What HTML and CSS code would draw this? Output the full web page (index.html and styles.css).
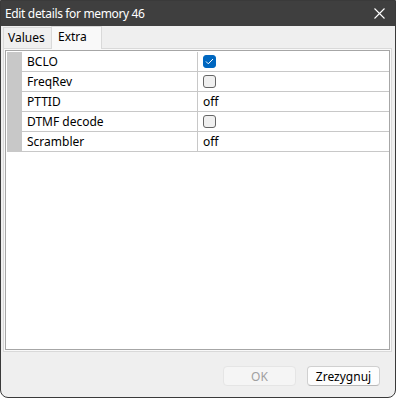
FILE: index.html
```html
<!DOCTYPE html>
<html>
<head>
<meta charset="utf-8">
<link rel="stylesheet" href="styles.css">
</head>
<body>
<div class="window">
  <div class="titlebar">
    <span class="title">Edit details for memory 46</span>
    <svg class="close" width="11" height="11" viewBox="0 0 11 11"><path d="M0.5 0.5 L10.5 10.5 M10.5 0.5 L0.5 10.5" stroke="#ffffff" stroke-width="1.1" fill="none"/></svg>
  </div>
  <div class="client">
    <div class="tabs">
      <div class="tab">Values</div>
      <div class="tab active">Extra</div>
    </div>
    <div class="panel">
      <div class="grid">
        <div class="row"><div class="hdr"></div><div class="name">BCLO</div><div class="val"><span class="cb checked"><svg width="9" height="7" viewBox="0 0 9 7"><path d="M1 3.5 L3.3 5.8 L8 1" stroke="#ffffff" stroke-width="1" fill="none"/></svg></span></div></div>
        <div class="row"><div class="hdr"></div><div class="name">FreqRev</div><div class="val"><span class="cb"></span></div></div>
        <div class="row"><div class="hdr"></div><div class="name">PTTID</div><div class="val">off</div></div>
        <div class="row"><div class="hdr"></div><div class="name">DTMF decode</div><div class="val"><span class="cb"></span></div></div>
        <div class="row"><div class="hdr"></div><div class="name">Scrambler</div><div class="val">off</div></div>
      </div>
    </div>
    <div class="footer">
      <button class="btn disabled">OK</button>
      <button class="btn">Zrezygnuj</button>
    </div>
  </div>
</div>
</body>
</html>
```
FILE: styles.css
```css
* { box-sizing: border-box; }
html, body { margin: 0; padding: 0; background: #ffffff; }
body { font-family: "Noto Sans", "Open Sans", sans-serif; font-size: 12px; }
.window {
  width: 396px; height: 398px;
  border: 1px solid #3a3a3a;
  border-radius: 0 0 8px 8px;
  background: #efefef;
  display: flex; flex-direction: column;
  overflow: hidden;
}
.titlebar {
  height: 25px; background: #3f3f3f; color: #ffffff;
  display: flex; align-items: center; justify-content: space-between;
  padding: 0 10px 0 4px;
  flex: none;
}
.title { font-size: 12px; line-height: 14px; letter-spacing: -0.35px; }
.close { display: block; }
.client { flex: 1; display: flex; flex-direction: column; }
.tabs { display: flex; height: 22px; padding-left: 2px; align-items: flex-end; flex: none; }
.tab {
  height: 21px; padding: 0 6px; line-height: 20px;
  border: 1px solid #d9d9d9; border-bottom: none;
  background: #efefef; color: #000;
}
.tab:first-child { border-right: none; width: 48px; padding-left: 4px; }
.tab.active { height: 23px; background: #f9f9f9; width: 51px; padding-left: 6px; line-height: 19px; margin-bottom: -1px; position: relative; }
.panel {
  margin: 0 3px 0 2px;
  height: 304px;
  border: 1px solid #d9d9d9;
  padding: 1px;
  flex: none;
  background: #f9f9f9;
}
.grid {
  height: 100%;
  border: 1px solid #a6a6a6;
  background: #ffffff;
  padding: 1px 0 0 1px;
}
.row { display: flex; height: 20px; }
.hdr { width: 15px; background: #c8c8c8; flex: none; }
.name {
  width: 176px; flex: none;
  border-right: 1px solid #c8c8c8; border-bottom: 1px solid #c8c8c8;
  padding-left: 5px; line-height: 19px; color: #000;
}
.val {
  flex: 1; border-bottom: 1px solid #c8c8c8;
  padding-left: 5px; line-height: 19px; color: #000;
  display: flex; align-items: center;
}
.cb {
  width: 13px; height: 13px; border-radius: 3px;
  border: 1px solid #666666; background: #f0f0f0;
  display: flex; align-items: center; justify-content: center;
}
.cb.checked { background: #0067c0; border-color: #0067c0; }
.cb svg { display: block; }
.footer {
  flex: 1; display: flex; justify-content: flex-end; align-items: flex-start;
  padding: 14px 15px 0 0; gap: 11px;
}
.btn {
  width: 73px; height: 20px; font: inherit; font-size: 12px;
  border: 1px solid #d0d0d0; border-bottom-color: #b8b8b8; border-radius: 4px;
  background: #fdfdfd; color: #000; padding: 0; line-height: 17px;
}
.btn.disabled { background: #f5f5f5; border-color: #e5e5e5; color: #a0a0a0; }
```
